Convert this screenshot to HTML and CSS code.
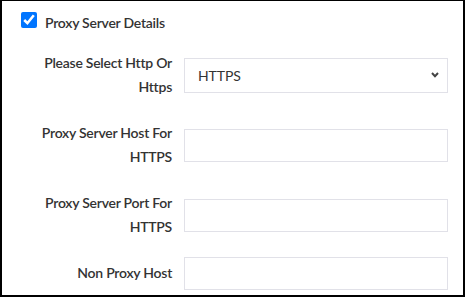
FILE: index.html
```html
<!DOCTYPE html>
<html>
<head>
<meta charset="utf-8">
<link rel="stylesheet" href="styles.css">
</head>
<body>
<div class="panel">
  <label class="header">
    <input type="checkbox" class="check" checked>
    <span class="header-text">Proxy Server Details</span>
  </label>
  <div class="row">
    <div class="label">Please Select Http Or Https</div>
    <div class="select">
      <span class="select-value">HTTPS</span>
      <svg class="chevron" width="8" height="6" viewBox="0 0 8 6"><path d="M1 1 L4 4.2 L7 1" fill="none" stroke="#444" stroke-width="2"/></svg>
    </div>
  </div>
  <div class="row">
    <div class="label">Proxy Server Host For HTTPS</div>
    <div class="input"></div>
  </div>
  <div class="row">
    <div class="label">Proxy Server Port For HTTPS</div>
    <div class="input"></div>
  </div>
  <div class="row">
    <div class="label">Non Proxy Host</div>
    <div class="input"></div>
  </div>
</div>
</body>
</html>
```

FILE: styles.css
```css
html, body {
  margin: 0;
  padding: 0;
  background: #fff;
}
.panel {
  box-sizing: border-box;
  width: 465px;
  height: 297px;
  border-style: solid;
  border-color: #000;
  border-width: 1px 2px 2px 2px;
  padding: 11px 15px 0 19px;
  font-family: Lato, "Liberation Sans", sans-serif;
  color: #333;
  overflow: hidden;
}
.header {
  display: flex;
  align-items: flex-start;
  gap: 8px;
  height: 17px;
  margin-bottom: 16px;
}
.check {
  width: 16px;
  height: 16px;
  margin: 0;
  accent-color: #0075ff;
}
.header-text {
  font-size: 14px;
  font-weight: 600;
  letter-spacing: -0.25px;
  line-height: 17px;
  padding-top: 2px;
}
.row {
  display: grid;
  grid-template-columns: 151px 1fr;
  column-gap: 12px;
  align-items: center;
  margin-bottom: 10px;
}
.label {
  text-align: right;
  font-size: 14px;
  font-weight: 600;
  letter-spacing: -0.25px;
  line-height: 24px;
  padding: 6px 0;
}
.select, .input {
  box-sizing: border-box;
  border: 1px solid #e1e1e8;
  background: #fff;
}
.select {
  height: 35px;
  display: flex;
  align-items: center;
  justify-content: space-between;
  padding: 0 8px 0 13px;
}
.select-value {
  font-size: 14px;
  letter-spacing: -0.1px;
}
.input {
  height: 33px;
}
```
